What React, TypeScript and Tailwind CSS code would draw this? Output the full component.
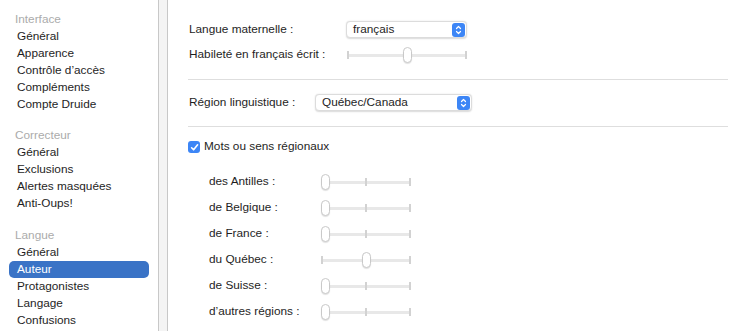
import React from "react";

type SliderProps = { width: number; value: number; ticks: number[] };

const Slider = ({ width, value, ticks }: SliderProps) => {
  return (
    <div className="relative h-[18px]" style={{ width }}>
      <div className="absolute left-0 right-0 top-[8px] h-[3px] rounded-full bg-[#e8e8e8]" />
      {ticks.map((t) => (
        <div
          key={t}
          className="absolute top-[5px] h-[8px] w-[2px] bg-[#d2d2d2]"
          style={{ left: `calc(${t * 100}% - ${t * 2}px)` }}
        />
      ))}
      <div
        className="absolute top-px h-[16px] w-[9px] rounded-full border border-[#c9c9c9] bg-white shadow-[0_1px_1px_rgba(0,0,0,0.12)]"
        style={{ left: `calc(${value * 100}% - ${value * 9}px)` }}
      />
    </div>
  );
};

const Select = ({ label, width }: { label: string; width: number }) => {
  return (
    <div
      className="flex h-[17px] items-center justify-between rounded-[4px] border border-[#dcdcdc] bg-white pl-[6px] pr-px shadow-[0_0.5px_1.5px_rgba(0,0,0,0.15)]"
      style={{ width }}
    >
      <span>{label}</span>
      <span className="flex h-[14px] w-[13px] items-center justify-center rounded-[3px] bg-[#3d86f6]">
        <svg width="7" height="10" viewBox="0 0 7 10" fill="none">
          <path d="M1.5 3.5 L3.5 1.5 L5.5 3.5" stroke="white" strokeWidth="1.2" strokeLinecap="round" strokeLinejoin="round" />
          <path d="M1.5 6.5 L3.5 8.5 L5.5 6.5" stroke="white" strokeWidth="1.2" strokeLinecap="round" strokeLinejoin="round" />
        </svg>
      </span>
    </div>
  );
};

const sections = [
  { title: "Interface", items: ["Général", "Apparence", "Contrôle d’accès", "Compléments", "Compte Druide"], mt: "mt-0" },
  { title: "Correcteur", items: ["Général", "Exclusions", "Alertes masquées", "Anti-Oups!"], mt: "mt-[14px]" },
  { title: "Langue", items: ["Général", "Auteur", "Protagonistes", "Langage", "Confusions"], mt: "mt-[15px]" },
];

const regions = [
  { label: "des Antilles :", value: 0 },
  { label: "de Belgique :", value: 0 },
  { label: "de France :", value: 0 },
  { label: "du Québec :", value: 0.5 },
  { label: "de Suisse :", value: 0 },
  { label: "d’autres régions :", value: 0 },
];

export default function App() {
  return (
    <div
      className="flex h-[331px] w-[747px] overflow-hidden bg-white text-[11.8px] text-[#1e1e1e]"
      style={{ fontFamily: '"Liberation Sans", Arial, sans-serif' }}
    >
      <aside className="w-[158px] shrink-0 pt-[11px]">
        {sections.map((s) => (
          <div key={s.title} className={s.mt}>
            <div className="flex h-[17px] items-center pl-[15px] text-[#ababab]">{s.title}</div>
            {s.items.map((item) =>
              s.title === "Langue" && item === "Auteur" ? (
                <div key={item} className="mx-[9px] flex h-[17px] items-center rounded-[5px] bg-[#3a73c6] pl-[8px] text-white">
                  {item}
                </div>
              ) : (
                <div key={item} className="flex h-[17px] items-center pl-[17px]">
                  {item}
                </div>
              )
            )}
          </div>
        ))}
      </aside>
      <div className="w-[10px] shrink-0 border-x border-[#c8c8c8] bg-[#f4f4f4]" />
      <main className="flex-1 pl-[20px] pr-[19px] pt-[21px]">
        <div className="flex h-[17px] items-center">
          <span className="w-[158px] pl-px">Langue maternelle :</span>
          <Select label="français" width={121} />
        </div>
        <div className="mt-[8px] flex h-[18px] items-center">
          <span className="w-[159px] pl-px">Habileté en français écrit :</span>
          <Slider width={120} value={0.5} ticks={[0, 1]} />
        </div>
        <div className="mt-[15px] h-px bg-[#dedede]" />
        <div className="mt-[14px] flex h-[17px] items-center">
          <span className="w-[127px] pl-px">Région linguistique :</span>
          <Select label="Québec/Canada" width={157} />
        </div>
        <div className="mt-[15px] h-px bg-[#dedede]" />
        <div className="mt-[13px] flex h-[14px] items-center gap-[4px]">
          <span className="flex h-[12px] w-[12px] items-center justify-center rounded-[3px] bg-[#3d86f6]">
            <svg width="9" height="9" viewBox="0 0 9 9" fill="none">
              <path d="M1.6 4.8 L3.6 6.8 L7.6 1.8" stroke="white" strokeWidth="1.6" strokeLinecap="round" strokeLinejoin="round" />
            </svg>
          </span>
          <span>Mots ou sens régionaux</span>
        </div>
        <div className="mt-[19px] flex flex-col gap-[8px]">
          {regions.map((r) => (
            <div key={r.label} className="flex h-[18px] items-center">
              <span className="w-[133px] pl-[21px]">{r.label}</span>
              <Slider width={90} value={r.value} ticks={[0, 0.5, 1]} />
            </div>
          ))}
        </div>
      </main>
    </div>
  );
}
